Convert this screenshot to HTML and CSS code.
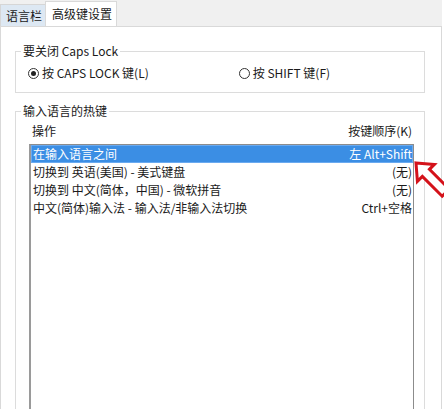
FILE: index.html
```html
<!DOCTYPE html>
<html lang="zh">
<head>
<meta charset="utf-8">
<link rel="stylesheet" href="styles.css">
</head>
<body>
<div class="tabs">
  <div class="tab">语言栏</div>
  <div class="tab active">高级键设置</div>
</div>
<div class="panel">
  <fieldset class="group caps">
    <legend>要关闭 Caps Lock</legend>
    <div class="radios">
      <label class="radio checked"><span class="dot"></span>按 CAPS LOCK 键(L)</label>
      <label class="radio"><span class="dot"></span>按 SHIFT 键(F)</label>
    </div>
  </fieldset>
  <fieldset class="group hotkeys">
    <legend>输入语言的热键</legend>
    <div class="head"><span>操作</span><span>按键顺序(K)</span></div>
    <div class="list">
      <div class="row sel"><span>在输入语言之间</span><span>左 Alt+Shift</span></div>
      <div class="row"><span>切换到 英语(美国) - 美式键盘</span><span>(无)</span></div>
      <div class="row"><span>切换到 中文(简体，中国) - 微软拼音</span><span>(无)</span></div>
      <div class="row"><span>中文(简体)输入法 - 输入法/非输入法切换</span><span>Ctrl+空格</span></div>
    </div>
  </fieldset>
  <svg class="arrow" width="44" height="50" viewBox="0 0 44 50">
    <g transform="translate(3,3) rotate(-45)">
      <path d="M0 0 L12 14 L5 14 L5 42 L-5 42 L-5 14 L-12 14 Z" fill="#fff" stroke="#d4121a" stroke-width="3" stroke-linejoin="miter"/>
    </g>
  </svg>
</div>
</body>
</html>
```

FILE: styles.css
```css
html, body {
  margin: 0;
  padding: 0;
  background: #fff;
  overflow: hidden;
}
body {
  width: 444px;
  height: 409px;
  font-family: "Noto Sans CJK SC", "Microsoft YaHei", sans-serif;
  font-size: 12px;
  line-height: 16px;
  color: #1a1a1a;
  position: relative;
}
.tabs {
  height: 26px;
  background: #f0f0f0;
  display: flex;
  align-items: flex-end;
  margin-right: 2px;
}
.tab {
  height: 22px;
  line-height: 21px;
  padding: 0 2px 0 5px;
  background: #dde8f3;
  border: 1px solid #d6d6d6;
  border-bottom: none;
  box-sizing: border-box;
  width: 46px;
  white-space: nowrap;
}
.tab.active {
  background: #fff;
  height: 26px;
  line-height: 24px;
  width: 72px;
  margin-left: -1px;
  margin-bottom: -1px;
  position: relative;
  padding-left: 6px;
  border-color: #d9d9d9;
}
.panel {
  position: relative;
  margin-right: 2px;
  border: 1px solid #d9d9d9;
  height: 400px;
  box-sizing: border-box;
  padding: 16px 16px 0 14px;
}
.group {
  margin: 0;
  border: 1px solid #dcdcdc;
  padding: 6px 12px 11px 12px;
  min-width: 0;
}
.group legend {
  padding: 0 2px;
  margin-left: -7px;
  line-height: 16px;
}
.radios {
  display: flex;
  height: 16px;
  align-items: center;
}
.radio {
  display: flex;
  align-items: center;
  white-space: nowrap;
}
.radio + .radio {
  margin-left: 90px;
}
.dot {
  width: 11px;
  height: 11px;
  border: 1px solid #333;
  border-radius: 50%;
  margin-right: 3px;
  box-sizing: border-box;
  position: relative;
  background: #fff;
}
.radio.checked .dot::after {
  content: "";
  position: absolute;
  left: 2px;
  top: 2px;
  width: 5px;
  height: 5px;
  border-radius: 50%;
  background: #222;
}
.hotkeys {
  margin-top: 10px;
  height: 320px;
  padding: 2px 10px 0 13px;
}
.hotkeys legend {
  margin-left: -8px;
}
.head {
  display: flex;
  justify-content: space-between;
  padding: 0 2px 0 3px;
  height: 23px;
  line-height: 20px;
}
.list {
  border: 1px solid #8c8c8c;
  border-left: 2px solid #9a9a9a;
  height: 300px;
  padding: 0;
}
.row {
  display: flex;
  justify-content: space-between;
  height: 18px;
  line-height: 18px;
  padding: 0 1px 0 2px;
  white-space: nowrap;
}
.row.sel {
  background: #3b8ee4;
  color: #fff;
  box-shadow: inset 0 0 0 1px #6aaaf0;
}
.arrow {
  position: absolute;
  left: 412px;
  top: 133px;
}
```
